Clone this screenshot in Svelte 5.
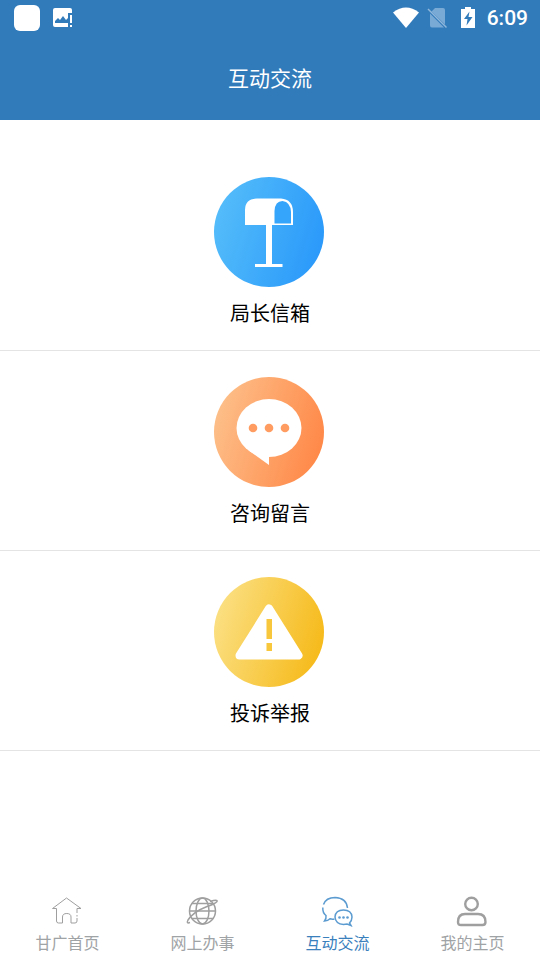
<script>
  let active = $state("talk");

  const entries = [
    { id: "mailbox", label: "局长信箱", from: "#55bdfa", to: "#2a99fa" },
    { id: "message", label: "咨询留言", from: "#fdc08a", to: "#ff8848" },
    { id: "report", label: "投诉举报", from: "#fbe084", to: "#f6ba1a" },
  ];

  const tabs = [
    { id: "home", label: "甘广首页" },
    { id: "online", label: "网上办事" },
    { id: "talk", label: "互动交流" },
    { id: "mine", label: "我的主页" },
  ];
</script>

<div class="app">
  <header>
    <div class="status">
      <span class="square"></span>
      <svg width="22" height="22" viewBox="0 0 22 22">
        <path fill="#fff" d="M3 1h15q2 0 2 2v3h-4v14H3q-2 0-2-2V3q0-2 2-2z" />
        <path fill="#327bbb" d="M3 16v-2l3-3 2 2 3-4 3 4 2-2v5z" />
        <path fill="#fff" d="M18 8h2v8h-2zM18 18h2v2h-2z" />
      </svg>
      <span class="spacer"></span>
      <svg width="26" height="22" viewBox="0 0 26 22">
        <path fill="#fff" d="M0 5.500Q13-4.500 26 5.500L13 21z" />
      </svg>
      <svg class="sim" width="22" height="22" viewBox="0 0 22 22">
        <path fill="#79a9d5" d="M8 1h8q2 0 2 2v14.500L4.500 4.500zM3 6.500L17 20.500H5q-2 0-2-2z" />
        <path fill="none" stroke="#8fb7dc" stroke-width="1.500" d="M1 2l18.500 18.500" />
      </svg>
      <svg class="battery" width="14" height="22" viewBox="0 0 14 22">
        <path fill="#fff" d="M4 0h6v2h4v19H0V2h4z" />
        <path fill="#327bbb" d="M8.500 4.500L3 12h3.500L5.500 18.500L11.500 10H7.500z" />
      </svg>
      <time>6:09</time>
    </div>
    <h1>互动交流</h1>
  </header>

  <main>
    {#each entries as entry}
      <button class="entry">
        <svg width="112" height="112" viewBox="0 0 112 112" aria-hidden="true">
          <defs>
            <linearGradient id="fill-{entry.id}" x1="0" y1="0.3" x2="1" y2="0.6">
              <stop offset="0" stop-color={entry.from} />
              <stop offset="1" stop-color={entry.to} />
            </linearGradient>
          </defs>
          <circle cx="55" cy="56" r="55" fill="url(#fill-{entry.id})" />
          {#if entry.id === "mailbox"}
            <path fill="#fff" d="M31 49V34Q31 23 43 22.500H67Q79 23.500 79 36V49H58V88H68.500V91H41V88H52V49z" />
            <path fill="#35a4fb" d="M60.500 47.500V35Q61 25 68.500 25Q76.500 26 77 36V47.500z" />
          {:else if entry.id === "message"}
            <ellipse cx="55" cy="52" rx="32.500" ry="29" fill="#fff" />
            <path fill="#fff" d="M34 74L55 89V79z" />
            <g fill="#ff9c61">
              <circle cx="39" cy="52" r="4.300" />
              <circle cx="55" cy="52" r="4.300" />
              <circle cx="71" cy="52" r="4.300" />
            </g>
          {:else}
            <path
              fill="#fff"
              stroke="#fff"
              stroke-width="8"
              stroke-linejoin="round"
              d="M55 32.500L84.500 79.500H25.500z"
            />
            <path fill="#f8c73b" d="M52.500 43h5.500v20h-5.500zM52.500 67h5.500v8h-5.500z" />
          {/if}
        </svg>
        <span>{entry.label}</span>
      </button>
    {/each}
  </main>

  <nav>
    {#each tabs as tab}
      <button class="tab" class:active={active === tab.id} onclick={() => (active = tab.id)}>
        <svg width="31" height="31" viewBox="0 0 31 31" aria-hidden="true">
          {#if tab.id === "home"}
            <path d="M25 17V12.500H29L14.500 2L.5 12.500H4.500V25Q4.500 27 6.500 27H10.500V21Q10.500 17.500 14.800 17.500Q19 17.500 19 21V27H23Q25 27 25 25V22M25 19V20.500" />
          {:else if tab.id === "online"}
            <g stroke-width="1.500">
              <circle cx="15.500" cy="15" r="13" />
              <ellipse cx="15.500" cy="15" rx="6.500" ry="13" />
              <path d="M2.500 15H28.500M5 7.500H26M5 22.500H26" />
              <path d="M23 5.500Q31 3 30 5.500Q28 8 20 10.500Q6 16 1 24Q-1 28 3 26.500" />
            </g>
          {:else if tab.id === "talk"}
            <g stroke-width="1.500">
              <path d="M1.500 8.500Q4 1.500 13 1.500Q24.500 2 25.500 12M.8 11.500Q.5 17 4 19.500Q4.500 22.500 2.500 25Q6 25 8 22.800Q10 23.500 12.500 23" />
              <path d="M27.500 27Q30 24.500 30 21Q29.500 14 21.500 14Q13.500 14 13 21Q13.500 28 21.500 28.500L25 28L29 29.500z" />
            </g>
            <g class="dots">
              <circle cx="17.500" cy="21.500" r="1.300" />
              <circle cx="21.500" cy="21.500" r="1.300" />
              <circle cx="25.500" cy="21.500" r="1.300" />
            </g>
          {:else}
            <g stroke-width="2.400">
              <circle cx="14.500" cy="8" r="6.300" />
              <path d="M8 18H21Q28.500 18 28.500 26Q28.500 29 25.500 29H4Q1 29 1 26Q1 18 8 18z" />
            </g>
          {/if}
        </svg>
        <span>{tab.label}</span>
      </button>
    {/each}
  </nav>
</div>

<style>
:global(body) {
  margin: 0;
  background: #fff;
}

.app {
  min-height: 100vh;
  display: flex;
  flex-direction: column;
  font-family: Roboto, "Noto Sans CJK SC", sans-serif;
}

header {
  background: #327bbb;
  color: #fff;
}

/* system bar on top of the title */
.status {
  display: flex;
  align-items: center;
  height: 36px;
  padding: 0 12px 0 14px;
}

.square {
  width: 26px;
  height: 26px;
  margin-right: 12px;
  border-radius: 6px;
  background: #fff;
}

.spacer {
  flex: 1;
}

.sim {
  margin-left: 8px;
}

.battery {
  margin: 0 12px 0 12px;
}

time {
  font-size: 21px;
  font-weight: 500;
  line-height: 36px;
}

h1 {
  margin: 0;
  padding-top: 2px;
  font-size: 21px;
  font-weight: 400;
  line-height: 82px;
  text-align: center;
}

main {
  flex: 1;
  padding-top: 31px;
}

button {
  border: none;
  background: none;
  font-family: inherit;
  cursor: pointer;
}

.entry {
  box-sizing: border-box;
  width: 100%;
  height: 200px;
  padding: 25px 0 0;
  display: flex;
  flex-direction: column;
  align-items: center;
  gap: 11px;
  border-bottom: 1px solid #e4e4e4;
  color: #000;
  font-size: 20px;
  line-height: 30px;
}

nav {
  display: grid;
  grid-template-columns: repeat(4, 1fr);
  padding: 8px 0 4px;
}

.tab {
  display: flex;
  flex-direction: column;
  align-items: center;
  gap: 5px;
  padding: 0;
  color: #a0a3a5;
  font-size: 16px;
  line-height: 24px;
}

.tab svg {
  fill: none;
  stroke: #a09f9f;
  overflow: visible;
}

.tab.active {
  color: #3a80bd;
}

.tab.active svg {
  stroke: #5b9bd0;
}

.tab .dots {
  fill: #5b9bd0;
  stroke: none;
}
</style>
